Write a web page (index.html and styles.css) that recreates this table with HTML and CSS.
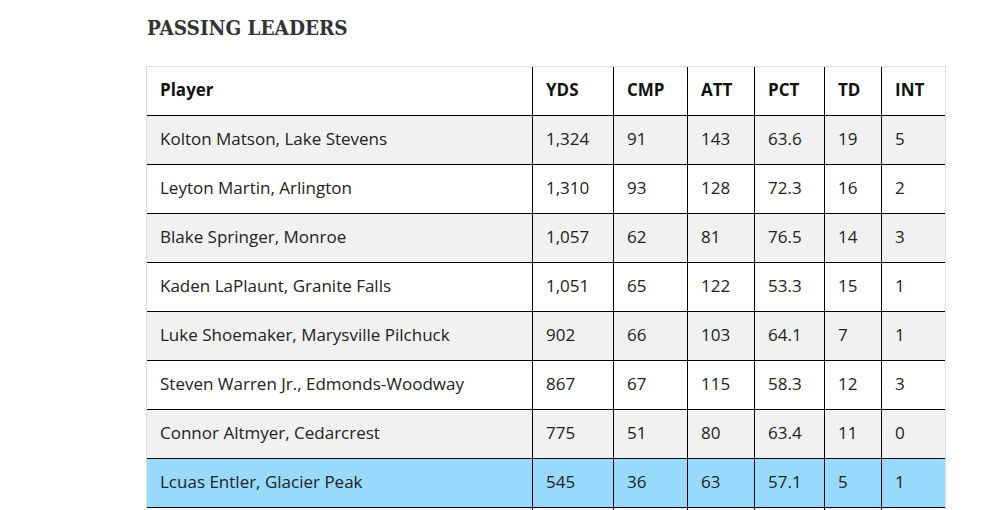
FILE: index.html
```html
<!DOCTYPE html>
<html>
<head>
<meta charset="utf-8">
<link rel="stylesheet" href="styles.css">
</head>
<body>
<main class="content">
  <h2 class="title">PASSING LEADERS</h2>
  <table class="stats">
    <colgroup>
      <col class="c-player"><col class="c-yds"><col class="c-cmp"><col class="c-att"><col class="c-pct"><col class="c-td"><col class="c-int">
    </colgroup>
    <thead>
      <tr><th>Player</th><th>YDS</th><th>CMP</th><th>ATT</th><th>PCT</th><th>TD</th><th>INT</th></tr>
    </thead>
    <tbody>
      <tr><td>Kolton Matson, Lake Stevens</td><td>1,324</td><td>91</td><td>143</td><td>63.6</td><td>19</td><td>5</td></tr>
      <tr><td>Leyton Martin, Arlington</td><td>1,310</td><td>93</td><td>128</td><td>72.3</td><td>16</td><td>2</td></tr>
      <tr><td>Blake Springer, Monroe</td><td>1,057</td><td>62</td><td>81</td><td>76.5</td><td>14</td><td>3</td></tr>
      <tr><td>Kaden LaPlaunt, Granite Falls</td><td>1,051</td><td>65</td><td>122</td><td>53.3</td><td>15</td><td>1</td></tr>
      <tr><td>Luke Shoemaker, Marysville Pilchuck</td><td>902</td><td>66</td><td>103</td><td>64.1</td><td>7</td><td>1</td></tr>
      <tr><td>Steven Warren Jr., Edmonds-Woodway</td><td>867</td><td>67</td><td>115</td><td>58.3</td><td>12</td><td>3</td></tr>
      <tr><td>Connor Altmyer, Cedarcrest</td><td>775</td><td>51</td><td>80</td><td>63.4</td><td>11</td><td>0</td></tr>
      <tr class="highlight"><td>Lcuas Entler, Glacier Peak</td><td>545</td><td>36</td><td>63</td><td>57.1</td><td>5</td><td>1</td></tr>
      <tr class="after"><td></td><td></td><td></td><td></td><td></td><td></td><td></td></tr>
    </tbody>
  </table>
</main>
</body>
</html>
```
FILE: styles.css
```css
html, body {
  margin: 0;
  padding: 0;
  background: #fff;
}
.content {
  padding: 13px 0 0 146px;
  width: 800px;
}
.title {
  margin: 0 0 0 1px;
  font-family: "DejaVu Serif Condensed", "DejaVu Serif", "Liberation Serif", serif;
  font-stretch: condensed;
  font-weight: bold;
  font-size: 20.5px;
  line-height: 30px;
  color: #333;
}
.stats {
  margin-top: 23px;
  width: 800px;
  table-layout: fixed;
  border-collapse: separate;
  border-spacing: 0;
  border: 1px solid #ddd;
  font-family: "Open Sans", sans-serif;
  font-size: 17px;
  color: #222;
}
.c-player { width: 386px; }
.c-yds { width: 81px; }
.c-cmp { width: 74px; }
.c-att { width: 67px; }
.c-pct { width: 70px; }
.c-td { width: 57px; }
.c-int { width: 63px; }
.stats th, .stats td {
  text-align: left;
  padding: 11px 0 13px 13px;
  line-height: 24px;
  border-right: 1px solid #000;
  border-bottom: 1px solid #000;
  white-space: nowrap;
}
.stats th:last-child, .stats td:last-child {
  border-right: none;
}
.stats th {
  font-weight: bold;
  color: #111;
  background: #fff;
}
.stats tbody tr:nth-child(odd) td {
  background: #f1f1f1;
}
.stats tbody tr:nth-child(even) td {
  background: #fff;
}
.stats tbody tr.highlight td {
  background: #97dafc;
}
.stats tbody tr.after td {
  background: #fff;
  height: 24px;
}
```
